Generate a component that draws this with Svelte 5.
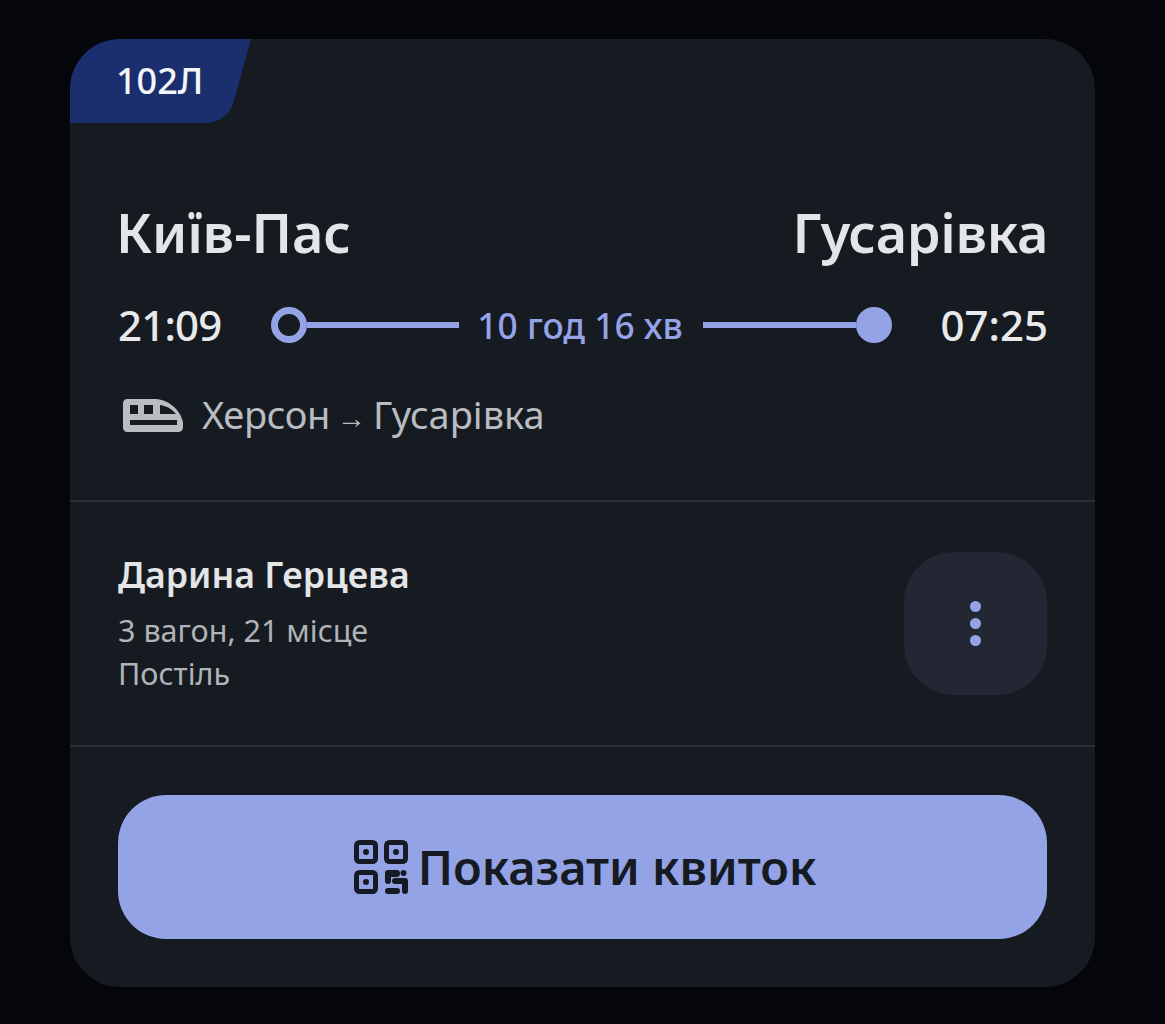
<script>
  const title = { from: 'Київ-Пас', to: 'Гусарівка' };
</script>

<main class="page">
  <article class="card">
    <div class="badge-row">
      <svg class="badge-bg" viewBox="0 0 181 84" aria-hidden="true">
        <path d="M50 0H181L164 62C160 76 150 84 134 84H0V50C0 20 20 0 50 0Z" fill="#1b2e6d" />
      </svg>
      <span class="badge">102Л</span>
    </div>

    <section class="trip">
      <div class="stations">
        <span class="from">{title.from}</span>
        <span class="to">{title.to}</span>
      </div>
      <div class="times">
        <span class="time">21:09</span>
        <div class="track">
          <span class="dot open"></span>
          <span class="line"></span>
          <span class="duration">10 год 16 хв</span>
          <span class="line"></span>
          <span class="dot"></span>
        </div>
        <span class="time wide">07:25</span>
      </div>
      <div class="route">
        <svg class="train" viewBox="0 0 60 33" aria-hidden="true">
          <path fill-rule="evenodd" fill="#b9bcc1" d="M4 0H31C45 0 57 10 60 23V28C60 31 58 33 55 33H4C2 33 0 31 0 29V4C0 2 2 0 4 0ZM7 6V15H15V6ZM21 6V15H30V6ZM37 6V15H53C49 10 44 7 37 6ZM7 21V26H54V21Z" />
        </svg>
        <span class="route-text"><span class="origin">Херсон</span><span class="arrow">→</span>Гусарівка</span>
      </div>
    </section>

    <section class="passenger">
      <div class="info">
        <div class="name">Дарина Герцева</div>
        <div class="seat">3 вагон, 21 місце</div>
        <div class="seat">Постіль</div>
      </div>
      <button class="more" aria-label="Меню">
        <i></i><i></i><i></i>
      </button>
    </section>

    <section class="action">
      <button class="show">
        <svg class="qr" viewBox="0 0 54 54" aria-hidden="true">
          <g fill="none" stroke="#161a22" stroke-width="5">
            <rect x="2.5" y="2.5" width="19" height="19" rx="3" />
            <rect x="32.5" y="2.5" width="19" height="19" rx="3" />
            <rect x="2.5" y="32.5" width="19" height="19" rx="3" />
          </g>
          <g fill="#161a22">
            <circle cx="12" cy="12" r="3" />
            <circle cx="42" cy="12" r="3" />
            <circle cx="12" cy="42" r="3" />
            <circle cx="49.5" cy="33" r="3" />
            <path d="M34 30H43C45 30 46 31.5 46 33.5C46 35.5 45 37 43 37H37V41C37 43 36 44 34 44C32 44 31 43 31 41V33C31 31 32 30 34 30Z" />
            <path d="M41 38H51C53 38 54 39 54 41V51C54 53 53 54 51 54C49 54 48 53 48 51V44H41C39 44 38 43 38 41C38 39 39 38 41 38Z" />
            <rect x="31" y="48" width="15" height="6" rx="3" />
          </g>
        </svg>
        <span>Показати квиток</span>
      </button>
    </section>
  </article>
</main>

<style>
  :global(body) {
    margin: 0;
    background: #05060b;
  }

  .page {
    box-sizing: border-box;
    height: 1024px;
    padding: 39px 70px 0;
    font-family: "Noto Sans", "Open Sans", sans-serif;
  }

  .card {
    width: 1025px;
    height: 948px;
    border-radius: 50px;
    background: #161a21;
    overflow: hidden;
    display: flex;
    flex-direction: column;
  }

  .badge-row {
    position: relative;
    height: 84px;
    flex: none;
  }

  .badge-bg {
    position: absolute;
    left: 0;
    top: 0;
    width: 181px;
    height: 84px;
  }

  .badge {
    position: absolute;
    left: 46px;
    top: 20px;
    font-size: 36px;
    line-height: 44px;
    font-weight: 500;
    color: #f4f5f8;
  }

  .trip {
    height: 379px;
    flex: none;
    box-sizing: border-box;
    padding: 0 48px;
    border-bottom: 2px solid #2b2e35;
  }

  .stations {
    display: flex;
    justify-content: space-between;
    margin-top: 75px;
    font-size: 54px;
    line-height: 68px;
    font-weight: 600;
    color: #e4e5e7;
  }

  .from {
    margin-left: -2px;
  }

  .to {
    letter-spacing: -0.3px;
    margin-right: -1px;
  }

  .times {
    display: flex;
    align-items: center;
    gap: 49px;
    margin-top: 35px;
    height: 48px;
  }

  .time {
    flex: 1;
    font-size: 42px;
    line-height: 48px;
    font-weight: 500;
    letter-spacing: -0.8px;
    color: #e8e9ea;
  }

  .time.wide {
    letter-spacing: 0;
    text-align: right;
    margin-right: 1px;
  }

  .track {
    display: flex;
    align-items: center;
    flex: none;
    width: 621px;
    color: #94a3e6;
  }

  .dot {
    flex: none;
    box-sizing: border-box;
    width: 36px;
    height: 36px;
    border-radius: 50%;
    background: #94a3e6;
  }

  .dot.open {
    background: transparent;
    border: 7px solid #94a3e6;
  }

  .line {
    flex: 1;
    height: 6px;
    background: #94a3e6;
  }

  .duration {
    margin: 0 20px 0 18px;
    font-size: 35.3px;
    line-height: 44px;
    font-weight: 500;
    white-space: nowrap;
  }

  .route {
    display: flex;
    align-items: center;
    gap: 19px;
    margin-top: 42px;
    padding-left: 5px;
    font-size: 38px;
    line-height: 46px;
    color: #b9bcc1;
  }

  .origin {
    letter-spacing: -0.3px;
  }

  .arrow {
    display: inline-block;
    width: 43px;
    text-align: center;
    font-size: 29px;
    vertical-align: 1px;
  }

  .train {
    width: 60px;
    height: 33px;
    flex: none;
  }

  .passenger {
    height: 245px;
    flex: none;
    box-sizing: border-box;
    padding: 0 48px;
    display: flex;
    align-items: center;
    justify-content: space-between;
    border-bottom: 2px solid #2b2e35;
  }

  .name {
    font-size: 35.7px;
    line-height: 46px;
    font-weight: 600;
    color: #e4e5e7;
    margin: -2px 0 12px;
  }

  .seat {
    font-size: 30.5px;
    line-height: 43px;
    color: #b0b3b8;
  }

  .more {
    width: 143px;
    height: 143px;
    border: 0;
    padding: 0;
    border-radius: 50px;
    background: #222733;
    display: flex;
    flex-direction: column;
    align-items: center;
    justify-content: center;
    gap: 6px;
  }

  .more i {
    width: 11px;
    height: 11px;
    border-radius: 50%;
    background: #94a3e6;
  }

  .action {
    flex: 1;
    padding: 48px 48px 0;
  }

  .show {
    width: 929px;
    height: 144px;
    border: 0;
    padding: 0 0 0 5px;
    border-radius: 48px;
    background: #94a3e6;
    color: #161a22;
    display: flex;
    align-items: center;
    justify-content: center;
    gap: 10px;
    font-family: inherit;
    font-size: 47px;
    font-weight: 600;
  }

  .qr {
    width: 54px;
    height: 54px;
    flex: none;
  }
</style>
